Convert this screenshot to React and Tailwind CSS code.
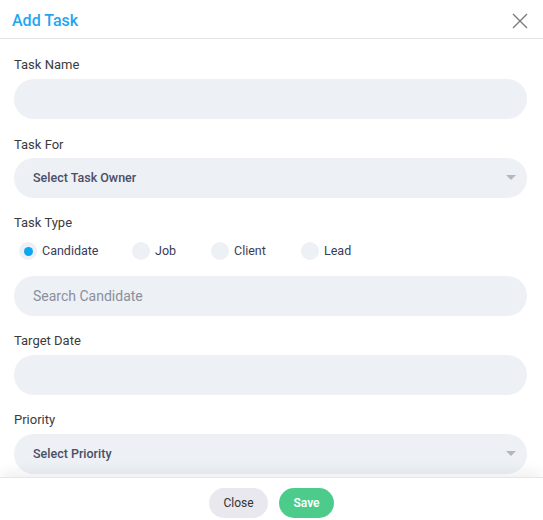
import React from 'react';

const Caret = () => (
  <svg className="absolute right-[11px] top-1/2 -translate-y-1/2" width="10" height="6" viewBox="0 0 10 6">
    <path d="M0 0 L10 0 L5 5 Z" fill="#b5b7bb" />
  </svg>
);

const Label = ({ children }) => (
  <div className="text-[13px] leading-4 text-[#3b3b3b] mb-[6px]">{children}</div>
);

const Input = ({ placeholder }) => (
  <div className="h-[40px] rounded-full bg-[#edf0f4] flex items-center px-[19px] text-[14px] text-[#8b8f9c]">
    {placeholder}
  </div>
);

const Select = ({ value }) => (
  <div className="relative h-[40px] rounded-full bg-[#edf0f4] flex items-center pl-[19px] pr-8 text-[12.5px] font-medium text-[#4b4e66]">
    {value}
    <Caret />
  </div>
);

const Radio = ({ label, checked, className = '' }) => (
  <label className={`flex items-center gap-[5px] text-[12.5px] text-[#3a3d57] ${className}`}>
    <span className="w-[18px] h-[18px] rounded-full bg-[#edf0f4] flex items-center justify-center shrink-0">
      {checked && <span className="w-[9px] h-[9px] rounded-full bg-[#0ea5f2]"></span>}
    </span>
    {label}
  </label>
);

const App = () => {
  return (
    <div className="w-[543px] h-[520px] bg-white flex flex-col overflow-hidden" style={{ fontFamily: 'Roboto, "Liberation Sans", sans-serif' }}>
      {/* Header */}
      <div className="h-[39px] shrink-0 border-b border-[#e3e3e3] flex items-center justify-between pl-[12px] pr-[15px] pt-[3px]">
        <h2 className="text-[16px] font-medium text-[#1fa6f3]">Add Task</h2>
        <svg width="16" height="16" viewBox="0 0 16 16" className="text-[#7a7a7a]">
          <path d="M1 1 L15 15 M15 1 L1 15" stroke="currentColor" strokeWidth="1.4" fill="none" />
        </svg>
      </div>

      {/* Body */}
      <div className="flex-1 overflow-hidden pl-[14px] pr-[16px] pt-[18px] relative">
        <div className="mb-[18px]">
          <Label>Task Name</Label>
          <Input placeholder="" />
        </div>
        <div className="mb-[17px]">
          <div className="text-[13px] leading-4 text-[#3b3b3b] mb-[5px]">Task For</div>
          <Select value="Select Task Owner" />
        </div>
        <div className="mb-[17px]">
          <div className="text-[13px] leading-4 text-[#3b3b3b]">Task Type</div>
          <div className="flex items-center ml-[5px] mt-[10px] h-[20px] mb-[15px]">
            <Radio label="Candidate" checked className="w-[113px]" />
            <Radio label="Job" className="w-[79px]" />
            <Radio label="Client" className="w-[90px]" />
            <Radio label="Lead" />
          </div>
          <Input placeholder="Search Candidate" />
        </div>
        <div className="mb-[17px]">
          <Label>Target Date</Label>
          <Input placeholder="" />
        </div>
        <div>
          <Label>Priority</Label>
          <Select value="Select Priority" />
        </div>
      </div>

      {/* Footer */}
      <div className="h-[43px] shrink-0 bg-white border-t border-[#e6e6e6] shadow-[0_-8px_12px_-2px_rgba(0,0,0,0.06)] relative z-10 flex justify-center gap-[11px] pt-[10px]">
        <button className="h-[30px] w-[59px] rounded-full bg-[#e8e8ee] text-[12px] text-[#333]">Close</button>
        <button className="h-[30px] w-[55px] rounded-full bg-[#4ccb8b] text-[12px] font-semibold text-white">Save</button>
      </div>
    </div>
  );
};

export default App;
